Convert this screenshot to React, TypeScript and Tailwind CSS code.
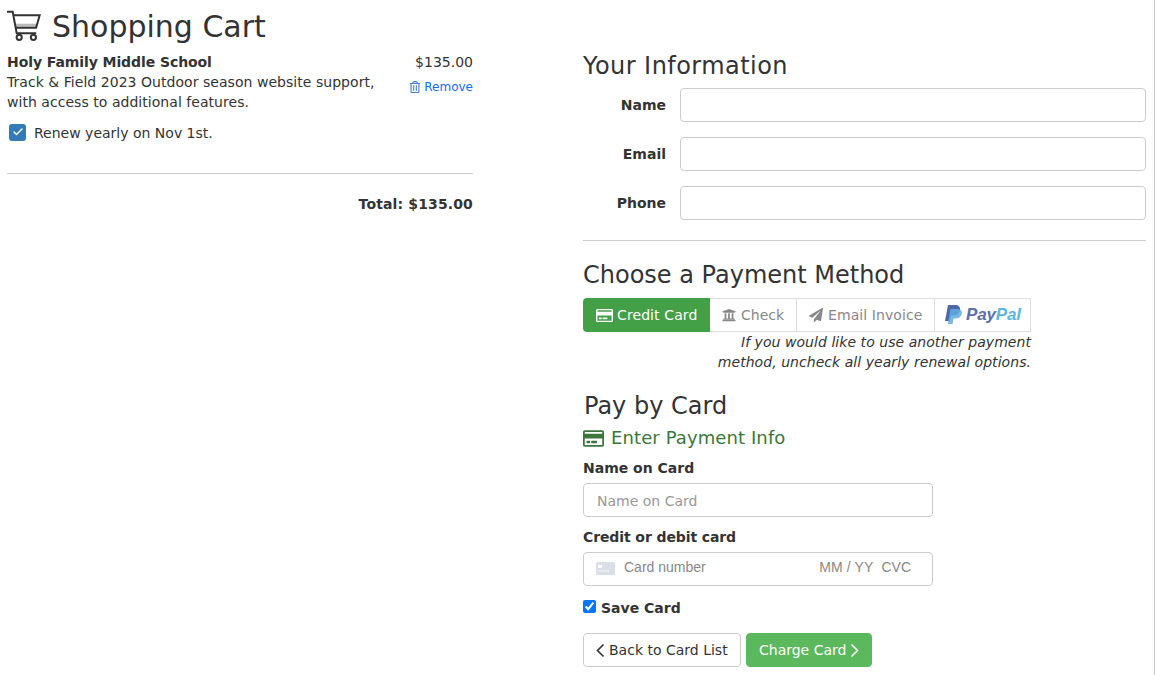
import React from "react";
import { FaRegCreditCard, FaUniversity, FaPaperPlane, FaRegTrashAlt } from "react-icons/fa";
import { Check } from "lucide-react";

const font = "font-['DejaVu_Sans',sans-serif]";

function InfoRow({ label }: { label: string }) {
  return (
    <div className="flex items-center mb-[15px]">
      <label className="w-[83px] text-right font-bold text-[14px] text-[#333]">{label}</label>
      <input className="ml-[14px] flex-1 h-[34px] border border-[#ccc] rounded bg-white" />
    </div>
  );
}

function CartIcon() {
  return (
    <svg width="35" height="31" viewBox="6 10 35 31" fill="none" stroke="#333" strokeWidth="2" className="-ml-[1px] mb-[2px] shrink-0">
      <path d="M15.500 25.200h21.400" stroke="#bbb" strokeWidth="3" />
      <path d="M7 11.700h5.700l4 21.600h19.500" />
      <path d="M13.500 15.200h26.200l-3.600 12.600H15.800" />
      <circle cx="19.200" cy="37.300" r="2.600" />
      <circle cx="33.400" cy="37.300" r="2.600" />
    </svg>
  );
}

function Chevron({ dir, color }: { dir: "left" | "right"; color: string }) {
  return (
    <svg width="9" height="15" viewBox="0 0 9 15" fill="none" stroke={color} strokeWidth="1.6" className="shrink-0">
      <path d={dir === "left" ? "M7.5 1.5 1.5 7.5l6 6" : "M1.5 1.5l6 6-6 6"} />
    </svg>
  );
}

export default function App() {
  return (
    <div className={`${font} relative w-[1155px] h-[675px] overflow-hidden bg-white text-[#333] text-[14px] leading-[20px] border-r border-[#ccc] flex`}>
      <div className="w-[583px] shrink-0 pl-[7px]">
        <div className="flex items-center h-[39px] mt-[7px]">
          <CartIcon />
          <h1 className="ml-[11px] text-[30px] leading-[39px]">Shopping Cart</h1>
        </div>
        <div className="w-[466px]">
          <div className="flex justify-between mt-[6px]">
            <div className="w-[380px]">
              <div className="font-bold tracking-[-0.08px]">Holy Family Middle School</div>
              <div className="tracking-[0.04px]">Track &amp; Field 2023 Outdoor season website support,<br />with access to additional features.</div>
            </div>
            <div className="flex flex-col items-end">
              <div>$135.00</div>
              <a className="flex items-center mt-[5px] text-[12px] leading-[20px] text-[#0d6efd]">
                <FaRegTrashAlt className="text-[12px] mr-[3px] text-[#4a7fd0]" />
                Remove
              </a>
            </div>
          </div>
          <div className="flex items-center mt-[11px] ml-[2px]">
            <span className="w-[17px] h-[17px] mb-[2px] rounded-[3px] bg-[#337ab7] flex items-center justify-center">
              <Check size={12} strokeWidth={3} className="text-white" />
            </span>
            <span className="ml-[8px]">Renew yearly on Nov 1st.</span>
          </div>
          <hr className="mt-[30px] border-t border-[#ccc]" />
          <div className="mt-[20px] text-right font-bold tracking-[0.14px]">Total: $135.00</div>
        </div>
      </div>
      <div className="w-[563px] shrink-0">
        <h2 className="mt-[50px] text-[24px] leading-[32px] mb-[6px] tracking-[0.45px]">Your Information</h2>
        <InfoRow label="Name" />
        <InfoRow label="Email" />
        <InfoRow label="Phone" />
        <hr className="mt-[20px] border-t border-[#ccc]" />
        <h2 className="mt-[18px] text-[24px] leading-[32px]">Choose a Payment Method</h2>
        <div className="mt-[7px] flex w-[448px] h-[34px]">
          <div className="flex items-center h-full w-[127px] pl-[13px] bg-[#43a047] text-white rounded-l tracking-[0.1px]">
            <FaRegCreditCard className="text-[17px] mr-[4px]" />Credit Card
          </div>
          <div className="flex items-center h-full w-[87px] pl-[12px] border-y border-r border-[#ddd] text-[#888]">
            <FaUniversity className="text-[14px] mr-[5px]" />Check
          </div>
          <div className="flex items-center h-full w-[138px] pl-[12px] border-y border-r border-[#ddd] text-[#888] tracking-[0.08px]">
            <FaPaperPlane className="text-[14px] mr-[5px]" />Email Invoice
          </div>
          <div className="flex items-center h-full w-[96px] pl-[9px] border-y border-r border-[#ddd]">
            <svg width="18" height="20" viewBox="0 0 18 20" className="shrink-0">
              <path d="M4 0h7c3.500 0 5.500 2 5 5-.5 3.500-3 5.500-6.500 5.500H7L6 16H1z" fill="#4a68a8" />
              <path d="M6.500 4h7.500c3 .3 4.300 2 3.800 4.500-.6 3.200-3 5-6.200 5H9.500L8.600 19H3.800z" fill="#62aee0" opacity="0.85" />
            </svg>
            <span className="ml-[4px] font-['Liberation_Sans',sans-serif] font-bold italic text-[17px] tracking-[-0.15px] text-[#5a70a8]">Pay<span className="text-[#5cb6e2]">Pal</span></span>
          </div>
        </div>
        <div className="w-[448px] text-right italic tracking-[0.05px]">If you would like to use another payment<br />method, uncheck all yearly renewal options.</div>
        <h2 className="mt-[18px] ml-[1px] text-[24px] leading-[32px]">Pay by Card</h2>
        <div className="flex items-center mt-[4px] text-[#3c763d] text-[18px] leading-[24px] tracking-[0.1px]">
          <FaRegCreditCard className="text-[21px] mr-[7px]" />Enter Payment Info
        </div>
        <div className="mt-[8px] font-bold">Name on Card</div>
        <input placeholder="Name on Card" className="mt-[5px] block w-[350px] h-[34px] border border-[#ccc] rounded px-[13px] pt-[1px] placeholder:text-[#999]" />
        <div className="mt-[10px] font-bold tracking-[-0.1px]">Credit or debit card</div>
        <div className="mt-[5px] w-[350px] h-[34px] border border-[#ccc] rounded flex items-center pl-[12px] pr-[21px] pb-[4px] font-['Liberation_Sans',sans-serif] text-[#888]">
          <svg width="19" height="13" viewBox="0 0 19 13" className="mr-[9px] mt-[3px]"><rect width="19" height="13" rx="1.500" fill="#d9dee8"/><rect x="2" y="3" width="4" height="3" fill="#fff"/><rect x="2" y="8.500" width="11" height="1" fill="#f5f6f9"/></svg>
          <span>Card number</span>
          <span className="ml-auto tracking-[0.1px]">MM / YY</span>
          <span className="ml-[8px]">CVC</span>
        </div>
        <label className="mt-[12px] flex items-center font-bold">
          <input type="checkbox" defaultChecked className="w-[13px] h-[13px] mb-[3px] mr-[5px] accent-[#0075ff]" />Save Card
        </label>
        <div className="mt-[15px] flex gap-[5px]">
          <button className="flex items-center h-[34px] w-[158px] pl-[12px] border border-[#ccc] rounded bg-white">
            <Chevron dir="left" color="#333" /><span className="ml-[4px]">Back to Card List</span>
          </button>
          <button className="flex items-center h-[34px] w-[126px] pl-[12px] border border-[#5cb85c] rounded bg-[#5cb85c] text-white">
            Charge Card<span className="ml-[4px] flex"><Chevron dir="right" color="#fff" /></span>
          </button>
        </div>
      </div>
    </div>
  );
}
